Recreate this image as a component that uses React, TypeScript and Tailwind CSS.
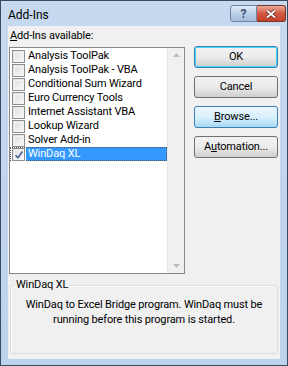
import React from 'react';

const items = [
  'Analysis ToolPak',
  'Analysis ToolPak - VBA',
  'Conditional Sum Wizard',
  'Euro Currency Tools',
  'Internet Assistant VBA',
  'Lookup Wizard',
  'Solver Add-in',
  'WinDaq XL',
];

const font = { fontFamily: 'Roboto, "Liberation Sans", sans-serif' };

const CheckBox: React.FC<{ checked?: boolean }> = ({ checked }) => (
  <span className="relative w-[13px] h-[13px] border border-[#8e8f8f] bg-gradient-to-br from-[#dcdcdc] to-[#fafafa] flex-none">
    <span className="absolute inset-[1px] border border-[#f4f4f4]" />
    {checked && (
      <svg className="absolute left-[1px] top-[1px]" width="10" height="10" viewBox="0 0 10 10">
        <path d="M1.5 5.2 L4 7.8 L8.5 1.5" fill="none" stroke="#4a5f97" strokeWidth="1.6" />
      </svg>
    )}
  </span>
);

const Btn: React.FC<{ label: React.ReactNode; variant?: 'default' | 'hot' | 'normal' }> = ({ label, variant = 'normal' }) => {
  const cls =
    variant === 'default'
      ? 'border-[#3c7fb1] shadow-[inset_0_0_0_1px_#48d8fb]'
      : variant === 'hot'
      ? 'border-[#3c7fb1] bg-gradient-to-b from-[#eaf6fd] via-[#d9f0fc] to-[#a7d9f5]'
      : 'border-[#707070]';
  const bg = variant === 'hot' ? '' : 'bg-gradient-to-b from-[#f2f2f2] via-[#ebebeb] to-[#cfcfcf]';
  return (
    <div className={`w-[84px] h-[22px] rounded-[3px] border flex items-center justify-center text-black ${bg} ${cls}`}>
      {label}
    </div>
  );
};

export default function App() {
  return (
    <div
      className="w-[288px] h-[366px] border border-[#3a4a5e] bg-gradient-to-b from-[#c6d9ef] to-[#bcd3ec] flex flex-col px-[7px] pb-[6px]"
      style={font}
    >
      {/* title bar */}
      <div className="h-[25px] flex items-start justify-between">
        <span className="text-[12px] text-black pt-[5px]">Add-Ins</span>
        <div className="flex mt-[4px] -mr-[6px]">
          <div className="w-[27px] h-[17px] rounded-l-[3px] border border-[#6d85a3] bg-gradient-to-b from-[#e2ecf8] via-[#bcd0e8] to-[#a4bedd] flex items-center justify-center text-[12px] font-bold text-[#3a5071]">
            ?
          </div>
          <div className="w-[29px] h-[17px] rounded-r-[3px] border border-l-0 border-[#7a3428] bg-gradient-to-b from-[#e9a99b] via-[#d2593f] to-[#c4402a] flex items-center justify-center">
            <svg width="12" height="10" viewBox="0 0 12 10">
              <path d="M2 1.5 L10 8.5 M10 1.5 L2 8.5" stroke="#5a1a10" strokeWidth="3.2" />
              <path d="M2 1.5 L10 8.5 M10 1.5 L2 8.5" stroke="#ffffff" strokeWidth="1.8" />
            </svg>
          </div>
        </div>
      </div>

      {/* client */}
      <div className="flex-1 bg-[#f0f0f0] flex flex-col text-[11px] tracking-[-0.15px] text-black">
        <div className="h-[21px] pl-[2px] pt-[3px] leading-[14px]">
          <span className="underline underline-offset-1">A</span>dd-Ins available:
        </div>

        <div className="flex items-start">
          <div className="ml-[1px] w-[176px] h-[227px] border border-[#828790] bg-white flex">
            <div className="flex-1 flex flex-col pt-[1px]">
              {items.map((it) => {
                const sel = it === 'WinDaq XL';
                return (
                  <div
                    key={it}
                    className={`h-[14px] flex items-center pl-[1px] ${sel ? 'outline outline-1 outline-dotted outline-[#555] -outline-offset-1' : ''}`}
                  >
                    <span className="w-[15px] flex justify-center items-center">
                      <CheckBox checked={sel} />
                    </span>
                    <span
                      className={`h-[14px] flex items-center pl-[2px] leading-[14px] ${sel ? 'flex-1 bg-[#3399ff] text-white' : ''}`}
                    >
                      {it}
                    </span>
                  </div>
                );
              })}
            </div>
            {/* scrollbar */}
            <div className="w-[17px] bg-[#f0f0f0] border-l border-[#e6e6e6] flex flex-col justify-between items-center py-[5px]">
              <svg width="7" height="4" viewBox="0 0 7 4">
                <path d="M0 4 L3.5 0 L7 4 Z" fill="#bcbcbc" />
              </svg>
              <svg width="7" height="4" viewBox="0 0 7 4">
                <path d="M0 0 L3.5 4 L7 0 Z" fill="#bcbcbc" />
              </svg>
            </div>
          </div>

          <div className="ml-[9px] -mt-[1px] flex flex-col gap-[8px]">
            <Btn label="OK" variant="default" />
            <Btn label="Cancel" />
            <Btn
              label={
                <span>
                  <span className="underline underline-offset-1">B</span>rowse...
                </span>
              }
              variant="hot"
            />
            <Btn
              label={
                <span>
                  A<span className="underline underline-offset-1">u</span>tomation...
                </span>
              }
            />
          </div>
        </div>

        <fieldset className="mt-[4px] ml-[2px] w-[268px] h-[76px] border border-[#d5dfe5] rounded-[3px] shadow-[inset_1px_1px_0_#ffffff]">
          <legend className="ml-[4px] px-[1px] leading-[14px]">WinDaq XL</legend>
          <p className="text-center leading-[15px] pt-[5px] whitespace-nowrap">
            WinDaq to Excel Bridge program. WinDaq must be
            <br />
            running before this program is started.
          </p>
        </fieldset>
      </div>
    </div>
  );
}
